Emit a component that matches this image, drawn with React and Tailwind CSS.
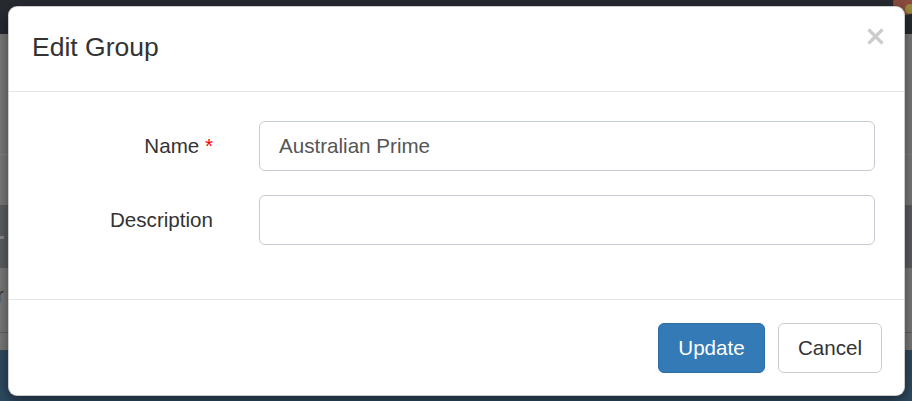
import React from "react";

const CloseIcon = () => (
  <svg width="17" height="17" viewBox="0 0 17 17" fill="none">
    <path d="M1.5 1.5L15.5 15.5M15.5 1.5L1.5 15.5" stroke="#cccccc" strokeWidth="3.2" />
  </svg>
);

const FormRow = ({ label, required, value }) => (
  <div className="flex items-center">
    <label className="w-[204px] shrink-0 text-right text-[20.6px] text-[#333333]">
      {label}
      {required && <span className="text-[#ff0000]"> *</span>}
    </label>
    <div className="ml-[46px] mr-[29px] flex h-[50px] flex-1 items-center rounded-[6px] border border-[#c5ccd6] bg-white pl-[19px] text-[20.6px] text-[#555555]">
      {value}
    </div>
  </div>
);

export default function App() {
  return (
    <div className="relative h-[401px] w-[912px] overflow-hidden bg-[#7b7b7b] font-['Liberation_Sans',Arial,sans-serif]">
      {/* dimmed page behind the modal */}
      <div className="flex h-full flex-col">
        <div className="relative h-[34px] bg-[#272a31]">
          <div className="absolute left-[893px] top-[-9px] h-[24px] w-[24px] rounded-full bg-[#8a4b3e]" />
          <div className="absolute left-[905px] top-[4px] h-[10px] w-[10px] rounded-full bg-[#9a8a3c]" />
        </div>
        <div className="h-[121px] border-b border-[#858585] bg-[#7b7b7b]" />
        <div className="h-[50px] bg-[#7b7b7b]" />
        <div className="relative h-[63px] bg-[#5c5f63]">
          <div className="absolute left-0 top-[31px] h-[3px] w-[4px] bg-[#8a8c8f]" />
        </div>
        <div className="h-[64px] bg-[#7b7b7b] pt-[17px] text-[20px] leading-none text-[#3a3328]">
          <span className="ml-[-3px]">r</span>
        </div>
        <div className="h-px bg-[#646464]" />
        <div className="h-[17px] bg-[#7b7b7b]" />
        <div className="flex-1 bg-[#2f4b61]" />
      </div>

      {/* modal */}
      <div className="absolute left-[8px] top-[6px] flex h-[390px] w-[897px] flex-col rounded-[9px] border border-black/20 bg-white shadow-[0_5px_15px_rgba(0,0,0,0.5)]">
        <div className="flex h-[85px] shrink-0 items-center justify-between border-b border-[#e5e5e5] pb-[2px] pl-[23px] pr-[20px]">
          <h4 className="text-[26.5px] text-[#333333]">Edit Group</h4>
          <button className="mt-[21px] flex h-[17px] w-[17px] items-center justify-center self-start">
            <CloseIcon />
          </button>
        </div>

        <div className="flex h-[207px] shrink-0 flex-col gap-[24px] pt-[29px]">
          <FormRow label="Name" required value="Australian Prime" />
          <FormRow label="Description" value="" />
        </div>

        <div className="flex flex-1 items-start justify-end gap-[13px] border-t border-[#e5e5e5] pr-[22px] pt-[23px]">
          <button className="h-[50px] w-[107px] rounded-[6px] border border-[#2e6da4] bg-[#337ab7] text-[20.6px] text-white">
            Update
          </button>
          <button className="h-[50px] w-[104px] rounded-[6px] border border-[#cccccc] bg-white text-[20.6px] text-[#333333]">
            Cancel
          </button>
        </div>
      </div>
    </div>
  );
}
